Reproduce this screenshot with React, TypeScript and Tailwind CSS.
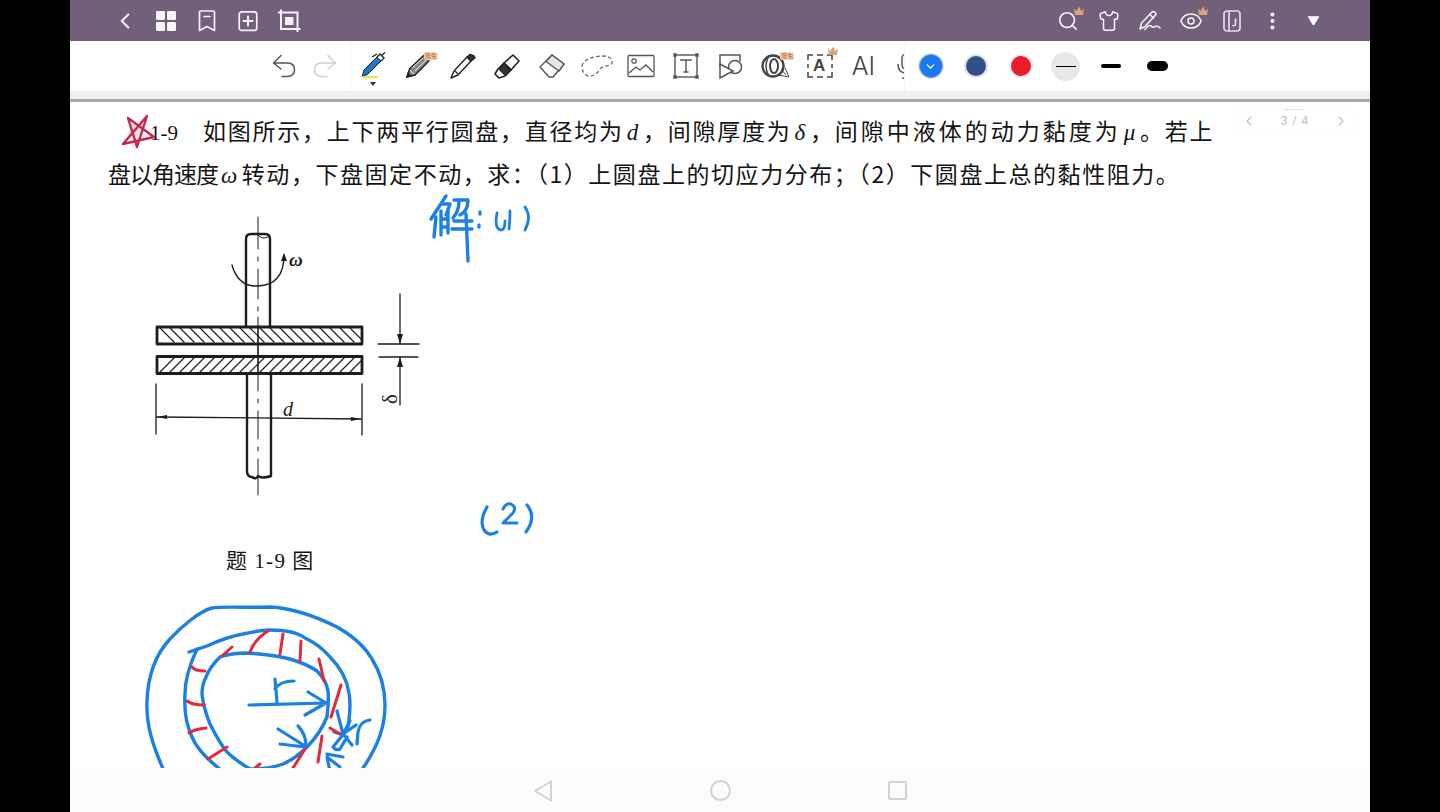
import React from "react";
import { ChevronLeft, ChevronRight, Search, Shirt, Eye, ChevronDown } from "lucide-react";

const Crown = ({ cls }: { cls: string }) => (
  <svg viewBox="0 0 12 10" className={`absolute ${cls}`}>
    <path d="M1 2.5 L3.5 5 L6 .8 L8.5 5 L11 2.5 L10 9 H2 Z" fill="#dba37c" />
  </svg>
);
const Badge = ({ cls }: { cls: string }) => (
  <span className={`absolute ${cls} bg-[#f8d3b4] text-[#b4622a] text-[6px] leading-[8px] px-[1px] rounded-[2px] font-['Noto_Sans_CJK_SC',sans-serif]`}>限免</span>
);

const H = ({ children }: { children: React.ReactNode }) => (
  <div className="relative w-[41px] h-[41px] flex items-center justify-center text-[#f4f0f5]">{children}</div>
);
const T = ({ children }: { children: React.ReactNode }) => (
  <div className="relative w-[44.7px] h-[50px] shrink-0 flex items-center justify-center">{children}</div>
);
const C = ({ children }: { children: React.ReactNode }) => (
  <div className="w-[45px] h-[50px] shrink-0 flex items-center justify-center">{children}</div>
);
const M = ({ children }: { children: React.ReactNode }) => (
  <i className="font-['Liberation_Serif',serif] mx-[3px]">{children}</i>
);

const Ink = "#1b80e6";
const Red = "#e5283a";

function Drawing() {
  return (
    <svg viewBox="70 103 1300 666" className="absolute left-0 top-0 w-[1300px] h-[666px] pointer-events-none" fill="none" strokeLinecap="round" strokeLinejoin="round">
      {/* red star */}
      <path d="M130 125 L145 125 L139 140 L128 140 Z" fill="#e9b6c6" fillOpacity=".45" />
      <path d="M123 145 L147 117 L137 148 L128 119 L154 138 Z" stroke="#c4264c" strokeWidth="2.4" />
      {/* figure */}
      <g stroke="#1d1d1d" strokeWidth="1.6">
        <path d="M258 218 V250 M258 258 V262 M258 270 V300 M258 308 V312 M258 318 V327" strokeWidth="1" />
        <path d="M258 327 V375" strokeWidth="1.6" />
        <path d="M258 375 V392 M258 400 V404 M258 412 V440 M258 448 V452 M258 460 V496" strokeWidth="1" />
        <path d="M246 327 V240 Q246 235 251 235 H265 Q270 235 270 240 V327" strokeWidth="2.4" />
        <path d="M258 236 Q262 241 268 238" strokeWidth="1" />
        <path d="M247 375 V472 Q247 478 252 478 Q256 481 258 477 Q262 480 271 477 V375" strokeWidth="2.4" />
        <rect x="157" y="328" width="205" height="17" strokeWidth="2.8" />
        <rect x="157" y="357.5" width="205" height="17" strokeWidth="2.8" />
        <path strokeWidth="1.2" d="M160 329 L174 343 M170 329 L184 343 M180 329 L194 343 M190 329 L204 343 M200 329 L214 343 M210 329 L224 343 M220 329 L234 343 M230 329 L244 343 M240 329 L254 343 M250 329 L264 343 M260 329 L274 343 M270 329 L284 343 M280 329 L294 343 M290 329 L304 343 M300 329 L314 343 M310 329 L324 343 M320 329 L334 343 M330 329 L344 343 M340 329 L354 343 M350 329 L361 340" />
        <path strokeWidth="1.2" d="M160 373 L174 359 M170 373 L184 359 M180 373 L194 359 M190 373 L204 359 M200 373 L214 359 M210 373 L224 359 M220 373 L234 359 M230 373 L244 359 M240 373 L254 359 M250 373 L264 359 M260 373 L274 359 M270 373 L284 359 M280 373 L294 359 M290 373 L304 359 M300 373 L314 359 M310 373 L324 359 M320 373 L334 359 M330 373 L344 359 M340 373 L354 359 M350 373 L361 362" />
        <path d="M232 266 Q238 288 258 287 Q284 286 284 256" strokeWidth="1.4" />
        <path d="M156 385 V435 M362 385 V436 M157 418 L361 420 M400 295 V344 M378 345 H419 M379 358 H418 M400 359 V406" strokeWidth="1.3" />
      </g>
      <path d="M284 254 L281 262 H287 Z M157 418 L167 416 V420 Z M361 420 L351 418 V422 Z M400 345 L397 335 H403 Z M400 358 L397 368 H403 Z" fill="#1d1d1d" />
      <text x="289" y="267" fill="#1d1d1d" fontSize="19" fontWeight="700" fontStyle="italic" fontFamily="'Liberation Serif',serif">ω</text>
      <text x="283" y="417" fill="#1d1d1d" fontSize="20" fontStyle="italic" fontFamily="'Liberation Serif',serif">d</text>
      <text x="0" y="0" transform="translate(397 405) rotate(-90)" fill="#1d1d1d" fontSize="21" fontFamily="'Liberation Serif',serif">δ</text>

      {/* handwriting */}
      <g stroke={Ink} strokeWidth="3.4">
        <path d="M446 197 L431 220 M441 205 H450 L446 216 M441 212 V236 M448 212 V234 M441 220 H448 M441 228 H447 M436 218 L434 238" />
        <path d="M454 201 H468 Q468 212 460 216 M459 202 Q459 212 453 219 M454 222 H472 M452 230 H472 M466 215 L468 262" />
        <path d="M480 213 V215 M479 226 V228" />
        <path d="M497 214 Q494 230 501 231 Q505 231 505 222 M510 212 Q510 222 509 230" strokeWidth="2.8" />
        <path d="M525 208 Q532 218 525 231" strokeWidth="2.8" />
        <path d="M487 508 Q479 522 484 531 Q489 538 497 533" strokeWidth="3.2" />
        <path d="M503 510 Q506 504 511 505 Q517 508 513 514 L503 524 H517" strokeWidth="3" />
        <path d="M527 506 Q537 518 526 533" strokeWidth="3.2" />
        {/* circles */}
        <path strokeWidth="3.4" d="M164 772 C152 745 146 725 147 702 C148 675 156 655 170 640 C182 627 200 612 212 609 C224 607 250 609 270 608 C292 609 315 617 337 628 C355 638 365 648 372 660 C382 676 385 690 385 706 C385 725 380 745 361 772" />
        <path strokeWidth="3.4" d="M189 653 L207 647 C220 641 232 637 243 635 C252 633 262 631 270 631 C285 631 297 633 305 639 C318 645 325 652 330 658 C340 668 347 680 349 694 C351 705 350 715 348 728" />
        <path strokeWidth="3.4" d="M197 650 C190 665 185 680 185 695 C184 710 186 725 192 738 C198 752 210 762 222 772" />
        <path strokeWidth="3.4" d="M220 658 C228 655 240 654 247 654 C262 655 278 657 290 660 C300 663 310 667 317 672 C323 678 327 685 328 692 C329 702 328 710 327 718 C322 730 315 740 307 748 C298 757 290 762 283 765 C272 769 262 770 250 770 C240 764 232 758 227 753 C220 745 215 735 210 725 C206 715 203 705 202 695 C202 688 203 684 206 678 C209 670 214 664 220 658" />
        <path strokeWidth="3.2" d="M249 706 L327 704 M308 693 L326 704 L305 716 M277 703 L275 680 M275 690 Q280 682 294 682" />
        <path strokeWidth="3.2" d="M278 730 L305 747 M280 745 L305 748 M298 727 Q306 735 306 747" />
        <path strokeWidth="3.2" d="M337 712 L343 735 M370 721 Q360 722 358 733 L357 745 M350 722 L342 737 L333 748 Q336 752 340 750 L347 738 M334 733 L344 736 M343 735 L356 726 M343 735 L352 746 M327 755 L343 758 M327 758 L330 772 M327 758 L340 768" />
      </g>
      <g stroke={Red} strokeWidth="3">
        <path d="M268 632 Q255 640 250 653 M283 635 L280 655 M301 642 L300 662 M319 660 L324 682 M341 686 L331 718 M330 729 L340 735 M322 737 L318 763 M305 750 L293 769 M260 765 L255 769 M227 748 L208 760 M206 729 Q195 730 189 734 M204 706 Q192 706 187 702 M205 672 Q195 672 192 668 M232 648 L222 657" />
      </g>
    </svg>
  );
}

export default function App() {
  return (
    <div className="w-[1440px] h-[812px] bg-black flex justify-center overflow-hidden font-['Liberation_Sans',sans-serif]">
      <div className="w-[1300px] h-full flex flex-col">
        {/* purple top bar */}
        <div className="h-[41px] shrink-0 bg-[#72607a] flex items-center justify-between pl-[34px] pr-[36px]">
          <div className="flex">
            <H><ChevronLeft size={26} strokeWidth={2} /></H>
            <H>
              <svg width="22" height="22" viewBox="0 0 22 22" fill="#f7f4f8">
                <rect x="1" y="1" width="9" height="9" rx="1.2" /><rect x="12" y="1" width="9" height="9" rx="1.2" />
                <rect x="1" y="12" width="9" height="9" rx="1.2" /><rect x="12" y="12" width="9" height="9" rx="1.2" />
              </svg>
            </H>
            <H>
              <svg width="20" height="22" viewBox="0 0 20 22" fill="none" stroke="currentColor" strokeWidth="1.7" strokeLinejoin="round" strokeLinecap="round">
                <path d="M2.5 2 Q2.5 1 3.5 1 H16.5 Q17.5 1 17.5 2 V20.5 L10 16.5 L2.5 20.5 Z" /><path d="M7 6.5 H13" />
              </svg>
            </H>
            <H>
              <svg width="20" height="22" viewBox="0 0 20 22" fill="none" stroke="currentColor" strokeWidth="1.7" strokeLinecap="round">
                <rect x="1.2" y="1.8" width="17.6" height="18.6" rx="2.5" /><path d="M10 6.5 V15.5 M5.5 11 H14.5" strokeWidth="2" />
              </svg>
            </H>
            <H>
              <svg width="24" height="24" viewBox="0 0 24 24" fill="none" stroke="currentColor" strokeWidth="2">
                <path d="M1 3.5 H20.5 V23 M4 0.5 V20 H23.5" /><rect x="8" y="8" width="8.5" height="8" fill="#f4f0f5" stroke="none" />
              </svg>
            </H>
          </div>
          <div className="flex">
            <H><Search size={22} strokeWidth={1.9} /><Crown cls="left-[26px] top-[6px] w-[12px] h-[10px]" /></H>
            <H><Shirt size={22} strokeWidth={1.7} /></H>
            <H>
              <svg width="23" height="22" viewBox="0 0 23 22" fill="none" stroke="currentColor" strokeWidth="1.6" strokeLinejoin="round" strokeLinecap="round">
                <path d="M2 19 L3.5 13 L14 2 Q15.5 1 17 2.3 Q18.5 3.8 17.3 5.3 L7 16.5 Z" /><path d="M12 4.5 L15.5 8 M7 19.5 Q11 14 13 16 Q14 18 17 16.5 Q20 15.5 22 18" />
              </svg>
            </H>
            <H><Eye size={24} strokeWidth={1.6} /><Crown cls="left-[27px] top-[6px] w-[12px] h-[10px]" /></H>
            <H>
              <svg width="18" height="22" viewBox="0 0 18 22" fill="none" stroke="#e4dbe6" strokeWidth="1.7" strokeLinecap="round">
                <rect x="1" y="1" width="16" height="20" rx="3" /><path d="M6 1.5 V20.5" /><path d="M12.5 9 V14.5 Q12.5 16 10 15.5" />
              </svg>
            </H>
            <H>
              <svg width="5" height="18" viewBox="0 0 5 18" fill="#f4f0f5"><circle cx="2.5" cy="2.5" r="2" /><circle cx="2.5" cy="9" r="2" /><circle cx="2.5" cy="15.5" r="2" /></svg>
            </H>
            <H>
              <svg width="13" height="10" viewBox="0 0 12 9" fill="#fff"><path d="M1 1 Q0 0 1.5 0 H10.5 Q12 0 11 1 L6.8 8 Q6 9 5.2 8 Z" /></svg>
            </H>
          </div>
        </div>

        {/* tool bar */}
        <div className="h-[50px] shrink-0 bg-white flex items-start">
          <div className="w-[280px] h-[50px] flex items-center justify-end pr-[5px] shrink-0">
            <div className="w-[41px] flex justify-center">
              <svg width="24" height="24" viewBox="0 0 24 24" fill="none" stroke="#555" strokeWidth="1.5" strokeLinecap="round" strokeLinejoin="round">
                <path d="M9 1.5 L1.5 9 L9 15 M2 9 H15 Q22.5 9 22.5 15.5 Q22.5 22.5 15 22.5 H10" />
              </svg>
            </div>
            <div className="w-[41px] flex justify-center">
              <svg width="24" height="24" viewBox="0 0 24 24" fill="none" stroke="#cfcfcf" strokeWidth="1.5" strokeLinecap="round" strokeLinejoin="round">
                <path d="M15 1.5 L22.5 9 L15 15 M22 9 H9 Q1.5 9 1.5 15.5 Q1.5 22.5 9 22.5 H14" />
              </svg>
            </div>
          </div>
          <div className="w-[554px] h-[50px] flex overflow-hidden border-l border-[#f3f3f3] shrink-0">
            <T>
              <svg width="28" height="28" viewBox="0 0 28 28">
                <path d="M3 25 L5 18 L18 5 L22 9 L9 22 Z" fill="#1f74d6" stroke="#222" strokeWidth="1" />
                <path d="M18 5 L21 2 L25 6 L22 9 M13 5 L18 2 M23 3 L26 0.5" stroke="#222" strokeWidth="1.4" fill="none" />
              </svg>
              <span className="absolute left-[11px] top-[35px] w-[16px] h-[2px] bg-[#f7e43a]" />
              <span className="absolute left-[19px] top-[41px] w-0 h-0 border-l-[3.5px] border-r-[3.5px] border-t-[4px] border-l-transparent border-r-transparent border-t-[#333]" />
            </T>
            <T>
              <svg width="26" height="26" viewBox="0 0 26 26" fill="none" stroke="#222" strokeWidth="1.4">
                <path d="M2 24 L4.5 16 L18 3 Q20 1.5 22 3.5 L23.5 5 Q25 7 23 9 L10 22 Z" fill="#888" /><path d="M2 24 L3.2 20 L6 22.8 Z" fill="#222" /><path d="M7 15 L18 5 M10 18 L21 7 M5 17 L9 21" stroke="#fff" strokeWidth=".8" />
              </svg>
              <Badge cls="left-[28px] top-[11px]" />
            </T>
            <T>
              <svg width="28" height="26" viewBox="0 0 28 26" fill="none" stroke="#222" strokeWidth="1.4" strokeLinejoin="round">
                <path d="M2 25 L5 18 L18 4 L22 8 L9 22 Z" fill="#fff" /><path d="M18 4 L21 1.5 L25 3 L26 5 L22 8 Z" fill="#333" /><path d="M6 18 L9 21" />
              </svg>
            </T>
            <T>
              <svg width="28" height="26" viewBox="0 0 28 26" fill="none" stroke="#222" strokeWidth="1.6" strokeLinejoin="round">
                <path d="M11 10 L20 2 L26 8 L18 17 Z" fill="#fff" /><path d="M5 16 L11 10 L18 17 L12 23 Z" fill="#333" /><path d="M5 16 L2 21 L6 25 L12 23" fill="#fff" />
              </svg>
            </T>
            <T>
              <svg width="28" height="26" viewBox="0 0 28 26" strokeWidth="1.4" stroke="#555" strokeLinejoin="round">
                <path d="M2 14 L14 2 L26 11 L15 24 H11 Z" fill="#fff" /><path d="M8 8.5 L21 18 L26 11 L14 2 Z" fill="#e6e6e6" />
              </svg>
            </T>
            <T><svg width="32" height="24" viewBox="0 0 32 24" fill="none" stroke="#666" strokeWidth="1.3" strokeDasharray="3.5 2.5"><path d="M1 12 C2 5 14 2 22 2 C29 2 32 6 31 9 C29 13 22 11 19 15 C16 21 9 24 5 21 C2 19 1 16 1 12 Z" /></svg></T>
            <T>
              <svg width="28" height="24" viewBox="0 0 28 24" fill="none" stroke="#555" strokeWidth="1.3">
                <rect x="1" y="1.5" width="26" height="21" rx="1" /><circle cx="7" cy="7" r="2.2" /><path d="M2 19 L9 13 L13 16 L19 11 L26 18" />
              </svg>
            </T>
            <T>
              <svg width="26" height="26" viewBox="0 0 26 26" fill="none" stroke="#555" strokeWidth="1.4">
                <rect x="2" y="2" width="22" height="22" /><path d="M8 8 V7 H18 V8 M13 7 V19 M10.5 19 H15.5" />
                <path d="M1 1 h2 v2 h-2 z M23 1 h2 v2 h-2 z M1 23 h2 v2 h-2 z M23 23 h2 v2 h-2 z" fill="#555" />
              </svg>
            </T>
            <T>
              <svg width="24" height="26" viewBox="0 0 24 26" fill="none" stroke="#555" strokeWidth="1.5">
                <path d="M1 14 V2 H21 V8" /><circle cx="16" cy="14" r="6.5" /><path d="M1 11 L14 18 L1 25 Z" fill="#fff" />
              </svg>
            </T>
            <T>
              <svg width="30" height="26" viewBox="0 0 30 26" fill="none" stroke="#444">
                <circle cx="12" cy="13" r="10.5" strokeWidth="2.4" /><ellipse cx="13" cy="13" rx="4" ry="7" strokeWidth="2" /><path d="M7 5 Q3 13 7 21" strokeWidth="1.5" /><path d="M17 22 L28 24 L24 15 M20 16 L25 22" strokeWidth="1" />
              </svg>
              <Badge cls="left-[27px] top-[11px]" />
            </T>
            <T>
              <svg width="26" height="24" viewBox="0 0 26 24" fill="none" stroke="#444" strokeWidth="1.5">
                <path d="M1 6 V1 H6 M20 1 H25 V6 M25 18 V23 H20 M6 23 H1 V18 M10 1 H16 M10 23 H16 M1 10 V14 M25 10 V14" />
              </svg>
              <span className="absolute left-[15px] top-[14px] text-[17px] leading-[22px] font-bold text-[#444]">A</span>
              <Crown cls="left-[29px] top-[5px] w-[12px] h-[10px]" />
            </T>
            <T><span className="text-[25px] leading-none font-['Inter',sans-serif] font-light text-[#444] -ml-[3px]">AI</span></T>
            <T>
              <svg width="20" height="26" viewBox="0 0 20 26" fill="none" stroke="#555" strokeWidth="1.5" className="absolute left-[9px] top-[12px]">
                <rect x="6" y="1" width="8" height="15" rx="4" /><path d="M2 11 Q2 20 10 20 Q18 20 18 11 M10 20 V25 M6 25 H14" />
              </svg>
            </T>
          </div>
          <div className="flex-1 h-[50px] flex pl-[3px] border-l border-[#f3f3f3]">
            <C>
              <div className="w-[24px] h-[24px] rounded-full bg-[#1a79f0] border border-[#7aa0d0] shadow-[0_0_0_1px_#e5e5e5] flex items-center justify-center">
                <ChevronDown size={13} strokeWidth={2.5} className="text-white" />
              </div>
            </C>
            <C><div className="w-[20px] h-[20px] rounded-full bg-[#334f89] shadow-[0_0_0_2px_#e3e5ea]" /></C>
            <C><div className="w-[20px] h-[20px] rounded-full bg-[#ec1c2f] shadow-[0_0_0_2px_#eee]" /></C>
            <C><div className="w-[29px] h-[29px] rounded-full bg-[#e8e8e8] flex items-center justify-center"><div className="w-[20px] h-[1px] bg-black" /></div></C>
            <C><div className="w-[20px] h-[4px] rounded-full bg-black" /></C>
            <C><div className="w-[21px] h-[10px] rounded-full bg-black ml-[3px]" /></C>
          </div>
        </div>
        <div className="h-[8px] shrink-0 bg-[#f0f0f0]" />
        <div className="h-[3px] shrink-0 bg-[#a9a9a9]" />

        {/* document page */}
        <div className="relative flex-1 bg-white overflow-hidden font-['Noto_Sans_CJK_SC',sans-serif] text-[#141414]">
          <div className="pt-[8px] text-[23px] leading-[40px] whitespace-nowrap">
            <p className="pl-[80px] tracking-[1.75px]">
              <span className="inline-block w-[53px] font-['Liberation_Serif',serif] text-[21px] tracking-normal">1-9</span>
              如图所示，上下两平行圆盘，直径均为<M>d</M>，间隙厚度为<M>δ</M>，<span className="tracking-[3px]">间隙中液体的动力黏度为</span><M>μ</M>。若上
            </p>
            <p className="pl-[38px] tracking-[1.55px]">
              <span className="tracking-[-1px]">盘以角速度</span><M>ω</M>转动，下盘固定不动，求：（1）上圆盘上的切应力分布；（2）下圆盘上总的黏性阻力。
            </p>
          </div>
          <p className="mt-[348px] pl-[156px] text-[21px] leading-[30px] tracking-[1.3px] whitespace-nowrap">
            题 <span className="font-['Liberation_Serif',serif]">1-9</span> 图
          </p>

          <Drawing />

          {/* page indicator */}
          <div className="absolute left-[1165px] top-[5px] w-[120px] h-[28px] rounded-full bg-white shadow-[0_0_3px_rgba(0,0,0,0.05)] flex items-center justify-between px-[6px] text-[#bdbdbd]">
            <ChevronLeft size={16} strokeWidth={1.7} />
            <span className="text-[12px] tracking-[1px] font-['Liberation_Sans',sans-serif]">3 / 4</span>
            <ChevronRight size={16} strokeWidth={1.7} />
            <span className="absolute left-[49px] top-[2px] w-[21px] h-[1px] bg-[#e0e0e0]" />
          </div>
        </div>

        {/* android nav */}
        <div className="h-[43px] shrink-0 bg-[#fbfbfb] flex justify-center items-center">
          <div className="w-[177px] flex justify-center">
            <svg width="20" height="22" viewBox="0 0 20 22" fill="none" stroke="#d2d2d2" strokeWidth="2" strokeLinejoin="round"><path d="M18 1.5 V20.5 L2 11 Z" /></svg>
          </div>
          <div className="w-[177px] flex justify-center"><div className="w-[21px] h-[21px] rounded-full border-2 border-[#d2d2d2]" /></div>
          <div className="w-[177px] flex justify-center"><div className="w-[19px] h-[19px] rounded-[2px] border-2 border-[#d2d2d2]" /></div>
        </div>
      </div>
    </div>
  );
}
